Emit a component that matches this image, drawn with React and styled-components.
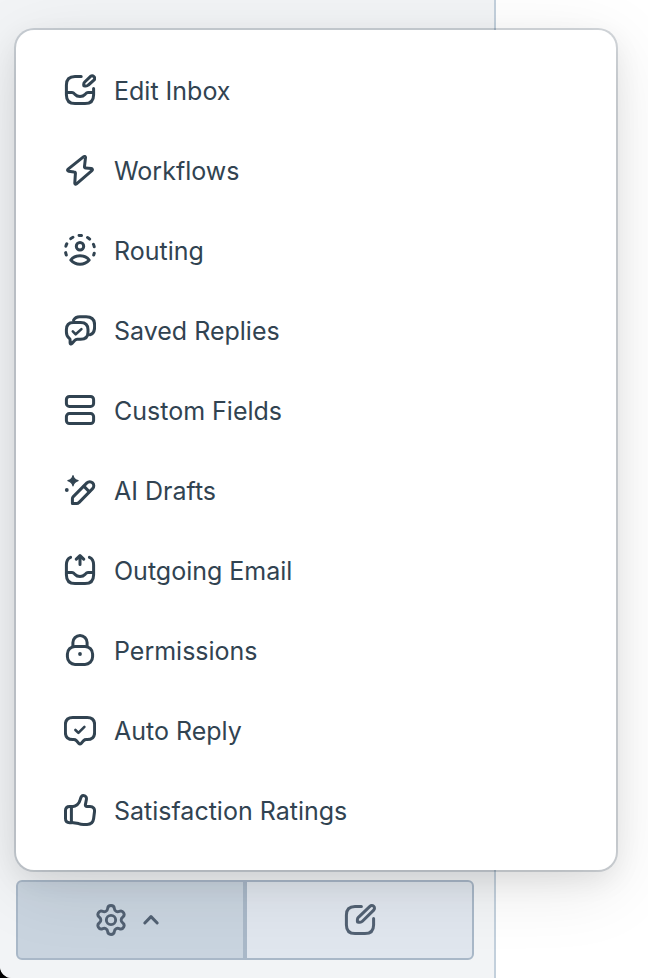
import styled, { createGlobalStyle } from "styled-components";

const GlobalStyle = createGlobalStyle`
  *,
  *::before,
  *::after {
    box-sizing: border-box;
  }

  html {
    background-color: #000;
  }

  body {
    margin: 0;
    font-family: Inter, "Liberation Sans", sans-serif;
    color: #314351;
  }

  button {
    font: inherit;
    color: inherit;
    cursor: pointer;
  }
`;

const Layout = styled.div`
  display: flex;
  min-height: 100vh;
  overflow: hidden;
  background-color: #fff;
  border-bottom-left-radius: 12px;
`;

const Sidebar = styled.aside`
  display: flex;
  flex-direction: column;
  justify-content: flex-end;
  flex: 0 0 496px;
  background-color: #f2f4f6;
  border-right: 2px solid #c3d0dc;
`;

const Main = styled.main`
  flex: 1;
`;

const Footer = styled.footer`
  padding: 0 20px 18px 16px;
`;

const Toolbar = styled.div`
  position: relative;
  display: flex;
`;

const ToolbarButton = styled.button`
  width: 50%;
  display: flex;
  align-items: center;
  justify-content: center;
  gap: 10px;
  height: 80px;
  padding: ${(props) => (props.$active ? "0 2px 0 0" : "0")};
  color: #526173;
  background-color: ${(props) => (props.$active ? "#c9d4df" : "#e0e6ee")};
  border: 2px solid #a9b8c8;

  &:first-child {
    border-radius: 6px 0 0 6px;
  }

  &:last-of-type {
    border-radius: 0 6px 6px 0;
  }
`;

const Menu = styled.ul`
  position: absolute;
  left: 0;
  bottom: calc(100% + 10px);
  width: calc(100vw - 48px);
  max-width: 600px;
  margin: 0;
  padding: 20px 0;
  list-style: none;
  background-color: #fff;
  border-radius: 18px;
  box-shadow:
    0 0 0 2px rgba(20, 45, 65, 0.18),
    0 10px 28px rgba(0, 0, 0, 0.08),
    0 16px 72px rgba(0, 0, 0, 0.1);
`;

const MenuButton = styled.button`
  display: flex;
  align-items: center;
  gap: 18px;
  width: 100%;
  height: 80px;
  padding: 0 48px;
  font-size: 25px;
  line-height: 32px;
  text-align: left;
  background: none;
  border: none;

  &:hover {
    background-color: #f1f3f5;
  }
`;

const Label = styled.span`
  padding-top: 2px;
`;

const Svg = styled.svg`
  flex: none;
  width: ${(props) => props.$size || 32}px;
  height: ${(props) => props.$size || 32}px;
  fill: none;
  stroke: currentColor;
  stroke-width: 3;
  stroke-linecap: round;
  stroke-linejoin: round;
`;

function Icon({ children, size, viewBox = "0 0 32 32" }) {
  return (
    <Svg $size={size} viewBox={viewBox} aria-hidden="true">
      {children}
    </Svg>
  );
}

const tray =
  "M2.4 18.4H8c1 0 1.7.4 2.3 1.2l.8 1c1.2 1.4 3 2 4.9 2s3.7-.6 4.9-2l.8-1c.6-.8 1.3-1.2 2.3-1.2h5.6";

const menuItems = [
  {
    label: "Edit Inbox",
    icon: (
      <>
        <path d="M17.2 2.4H11C5 2.4 2.4 5 2.4 11v10c0 6 2.6 8.6 8.6 8.6h10c6 0 8.6-2.6 8.6-8.6v-6.4" />
        <path d={tray} />
        <path d="M19.7 10.4c0-1 .3-1.7 1-2.4L26.6 2.3a2.6 2.6 0 0 1 3.6 3.6L24.4 11c-.7.7-1.5 1-2.5 1h-1.2a1 1 0 0 1-1-1z" />
      </>
    ),
  },
  {
    label: "Workflows",
    icon: (
      <path d="M19.4 2.8 4.1 15.2c-.9.8-.6 1.9.5 2l5.4.8c1 .1 1.5.7 1.4 1.7l-.6 9.2c-.1 1.2.8 1.6 1.7.9l15.4-13.2c.9-.8.6-2-.6-2.1l-5.5-.5c-1-.1-1.5-.7-1.3-1.7l1-8.6c.1-1.2-1.1-1.7-2.1-.9z" />
    ),
  },
  {
    label: "Routing",
    icon: (
      <>
        <path
          d="M2.29 21.02A14.6 14.6 0 1 1 29.71 21.02"
          strokeDasharray="2.6 6.32"
        />
        <circle cx="16" cy="12.3" r="3.7" />
        <path d="M6.8 26c2-2.8 5.3-4.3 9.2-4.3s7.2 1.5 9.2 4.3c-2.3 2.7-5.5 4.3-9.2 4.3S9.1 28.7 6.8 26z" />
      </>
    ),
  },
  {
    label: "Saved Replies",
    icon: (
      <>
        <path d="M9.4 8.4h7.2c4.8 0 7.4 2.6 7.4 7.2v2.4c0 4.8-2.6 7.3-7.4 7.3h-3.4c-1 0-1.7.3-2.3 1l-3.1 3.3c-.7.8-1.7.4-1.7-.6v-3.2c0-.7-.3-1.2-.9-1.6-1.9-1.3-2.8-3.4-2.8-6.2v-2.4c0-4.6 2.4-7.2 7-7.2z" />
        <path d="M9.6 6.2c1.1-2.3 3.2-3.5 6.2-3.5h6.4c5.4 0 8.4 3 8.4 8.2v2.2c0 4.2-1.7 6.8-4.6 7.7" />
        <path d="m8.8 17.4 2.9 2.9 5.7-5.2" strokeWidth="2.6" />
      </>
    ),
  },
  {
    label: "Custom Fields",
    icon: (
      <>
        <rect x="2.4" y="2.4" width="27.2" height="10" rx="3" />
        <rect x="2.4" y="19.6" width="27.2" height="10" rx="3" />
      </>
    ),
  },
  {
    label: "AI Drafts",
    icon: (
      <>
        <path
          d="M9 1.6c.8 3.2 1.9 4.3 5.1 5.1-3.2.8-4.3 1.9-5.1 5.1-.8-3.2-1.9-4.3-5.1-5.1C7.1 5.9 8.2 4.8 9 1.6z"
          fill="currentColor"
          strokeWidth="1.2"
        />
        <circle cx="2.8" cy="16" r="1.9" fill="currentColor" stroke="none" />
        <path d="M8.4 29.6v-4.8c0-.9.3-1.6.9-2.2L22.9 8.9a4 4 0 0 1 5.7 5.7L14.9 28.6c-.6.7-1.3 1-2.2 1z" />
        <path d="m20 12.4 5.2 5.2" />
      </>
    ),
  },
  {
    label: "Outgoing Email",
    icon: (
      <>
        <path d="M6.6 3.4C3.8 4.5 2.4 6.9 2.4 11v10c0 6 2.6 8.6 8.6 8.6h10c6 0 8.6-2.6 8.6-8.6V11c0-4.1-1.4-6.5-4.2-7.6" />
        <path d={tray} />
        <path d="M16 10.6V2M12.3 5.2 16 1.6l3.7 3.6" />
      </>
    ),
  },
  {
    label: "Permissions",
    icon: (
      <>
        <rect x="3.4" y="12.4" width="25.2" height="18" rx="7.6" />
        <path d="M8.9 12.2V8.6a7.1 7.1 0 0 1 14.2 0v3.6" />
        <circle cx="16" cy="20" r="1.9" fill="currentColor" stroke="none" />
      </>
    ),
  },
  {
    label: "Auto Reply",
    icon: (
      <>
        <path d="M8.8 3.4h14.4c5 0 7.4 2.4 7.4 7.2v7.8c0 4.8-2.4 7.2-7.4 7.2h-1c-1 0-1.8.3-2.5 1l-2.6 2.9c-.7.8-1.5.8-2.2 0l-2.6-2.9c-.7-.7-1.5-1-2.5-1h-1c-5 0-7.4-2.4-7.4-7.2v-7.8c0-4.8 2.4-7.2 7.4-7.2z" />
        <path d="m11.4 16 3 2.9 6-6" strokeWidth="2.6" />
      </>
    ),
  },
  {
    label: "Satisfaction Ratings",
    icon: (
      <>
        <path d="M7.4 12.4H5.6c-2.9 0-4.1 1.3-4.1 4.2v8c0 2.9 1.2 4.2 4.1 4.2h1.8z" />
        <path d="M7.6 12.8c4.6-.6 7.6-3 8.6-7.2.5-2 .9-4.1 3-4.1 2.3 0 3.6 1.7 3.2 4l-1 5.1c-.2 1.2.4 2 1.6 2h3c3.2 0 4.9 2 4.5 5.2l-.9 7c-.5 3.6-2.7 5.6-6.5 5.6h-3.6c-2 0-3.3-.2-4.9-.8l-7-1.2" />
      </>
    ),
  },
];

function SettingsMenu() {
  return (
    <Menu id="settings-menu">
      {menuItems.map((item) => (
        <li key={item.label}>
          <MenuButton type="button">
            <Icon>{item.icon}</Icon>
            <Label>{item.label}</Label>
          </MenuButton>
        </li>
      ))}
    </Menu>
  );
}

function App() {
  return (
    <>
      <GlobalStyle />
      <Layout>
        <Sidebar>
          <Footer>
            <Toolbar>
              <ToolbarButton
                type="button"
                $active
                aria-label="Settings"
                aria-expanded="true"
                aria-controls="settings-menu"
              >
                <Icon viewBox="1 1 22 22">
                  <g strokeWidth="2">
                    <path d="M9.671 4.136a2.34 2.34 0 0 1 4.659 0 2.34 2.34 0 0 0 3.319 1.915 2.34 2.34 0 0 1 2.33 4.033 2.34 2.34 0 0 0 0 3.831 2.34 2.34 0 0 1-2.33 4.033 2.34 2.34 0 0 0-3.319 1.915 2.34 2.34 0 0 1-4.659 0 2.34 2.34 0 0 0-3.32-1.915 2.34 2.34 0 0 1-2.33-4.033 2.34 2.34 0 0 0 0-3.831A2.34 2.34 0 0 1 6.35 6.051a2.34 2.34 0 0 0 3.319-1.915" />
                    <circle cx="12" cy="12" r="3.2" />
                  </g>
                </Icon>
                <Icon size={28} viewBox="0 0 28 28">
                  <path d="m7.8 17 6.2-6.4 6.2 6.4" />
                </Icon>
              </ToolbarButton>
              <ToolbarButton type="button" aria-label="New conversation">
                <Icon>
                  <path d="M17.4 2.4H11C5 2.4 2.4 5 2.4 11v10c0 6 2.6 8.6 8.6 8.6h10c6 0 8.6-2.6 8.6-8.6v-6.4" />
                  <path d="M13.4 17.3v-1.6c0-.9.3-1.7 1-2.4L25.9 2.3a2.6 2.6 0 0 1 3.8 3.8L18.4 17.3c-.7.7-1.5 1-2.4 1h-1.6a1 1 0 0 1-1-1z" />
                </Icon>
              </ToolbarButton>
              <SettingsMenu />
            </Toolbar>
          </Footer>
        </Sidebar>
        <Main />
      </Layout>
    </>
  );
}

export default App;
